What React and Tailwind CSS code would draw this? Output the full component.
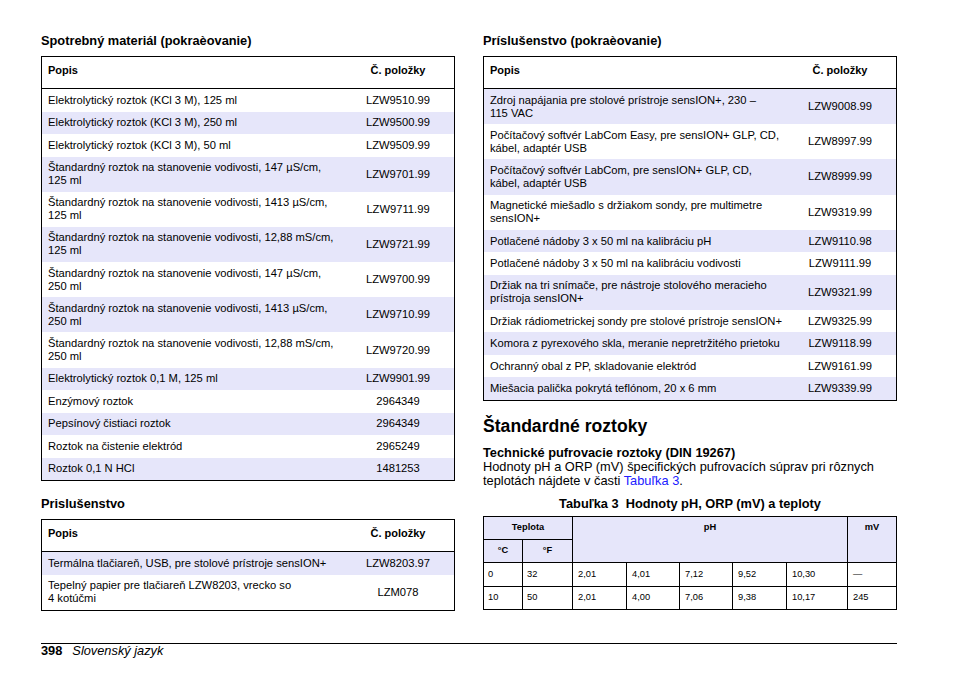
const consumables = [
  { lines: ["Elektrolytický roztok (KCl 3 M), 125 ml"], no: "LZW9510.99" },
  { lines: ["Elektrolytický roztok (KCl 3 M), 250 ml"], no: "LZW9500.99" },
  { lines: ["Elektrolytický roztok (KCl 3 M), 50 ml"], no: "LZW9509.99" },
  { lines: ["Štandardný roztok na stanovenie vodivosti, 147 µS/cm,", "125 ml"], no: "LZW9701.99" },
  { lines: ["Štandardný roztok na stanovenie vodivosti, 1413 µS/cm,", "125 ml"], no: "LZW9711.99" },
  { lines: ["Štandardný roztok na stanovenie vodivosti, 12,88 mS/cm,", "125 ml"], no: "LZW9721.99" },
  { lines: ["Štandardný roztok na stanovenie vodivosti, 147 µS/cm,", "250 ml"], no: "LZW9700.99" },
  { lines: ["Štandardný roztok na stanovenie vodivosti, 1413 µS/cm,", "250 ml"], no: "LZW9710.99" },
  { lines: ["Štandardný roztok na stanovenie vodivosti, 12,88 mS/cm,", "250 ml"], no: "LZW9720.99" },
  { lines: ["Elektrolytický roztok 0,1 M, 125 ml"], no: "LZW9901.99" },
  { lines: ["Enzýmový roztok"], no: "2964349" },
  { lines: ["Pepsínový čistiaci roztok"], no: "2964349" },
  { lines: ["Roztok na čistenie elektród"], no: "2965249" },
  { lines: ["Roztok 0,1 N HCl"], no: "1481253" },
];

const accessories = [
  { lines: ["Termálna tlačiareň, USB, pre stolové prístroje sensION+"], no: "LZW8203.97" },
  { lines: ["Tepelný papier pre tlačiareň LZW8203, vrecko so", "4 kotúčmi"], no: "LZM078" },
];

const accessoriesCont = [
  { lines: ["Zdroj napájania pre stolové prístroje sensION+, 230 –", "115 VAC"], no: "LZW9008.99" },
  { lines: ["Počítačový softvér LabCom Easy, pre sensION+ GLP, CD,", "kábel, adaptér USB"], no: "LZW8997.99" },
  { lines: ["Počítačový softvér LabCom, pre sensION+ GLP, CD,", "kábel, adaptér USB"], no: "LZW8999.99" },
  { lines: ["Magnetické miešadlo s držiakom sondy, pre multimetre", "sensION+"], no: "LZW9319.99" },
  { lines: ["Potlačené nádoby 3 x 50 ml na kalibráciu pH"], no: "LZW9110.98" },
  { lines: ["Potlačené nádoby 3 x 50 ml na kalibráciu vodivosti"], no: "LZW9111.99" },
  { lines: ["Držiak na tri snímače, pre nástroje stolového meracieho", "prístroja sensION+"], no: "LZW9321.99" },
  { lines: ["Držiak rádiometrickej sondy pre stolové prístroje sensION+"], no: "LZW9325.99" },
  { lines: ["Komora z pyrexového skla, meranie nepretržitého prietoku"], no: "LZW9118.99" },
  { lines: ["Ochranný obal z PP, skladovanie elektród"], no: "LZW9161.99" },
  { lines: ["Miešacia palička pokrytá teflónom, 20 x 6 mm"], no: "LZW9339.99" },
];

const bufferRows = [
  ["0", "32", "2,01", "4,01", "7,12", "9,52", "10,30", "—"],
  ["10", "50", "2,01", "4,00", "7,06", "9,38", "10,17", "245"],
];

function SectionTitle({ children, className = "" }) {
  return (
    <h3 className={`text-[12.8px] font-bold leading-[15px] ${className}`}>
      {children}
    </h3>
  );
}

function PartsTable({ rows, startShaded = false }) {
  return (
    <div className="border border-black">
      <div className="flex h-[32px] border-b border-black pt-[7px] text-[11px] font-bold leading-[13px]">
        <div className="w-[300px] pl-[6px]">Popis</div>
        <div className="flex-1 text-center">Č. položky</div>
      </div>

      {rows.map((row, i) => {
        const shaded = startShaded ? i % 2 === 0 : i % 2 === 1;
        return (
          <div
            key={i}
            className={`flex items-center text-[11.2px] leading-[13px] ${
              row.lines.length > 1 ? "h-[35.2px]" : "h-[22.5px]"
            } ${shaded ? "bg-[#e6e6fa]" : "bg-white"}`}
          >
            <div className="w-[300px] whitespace-nowrap pl-[6px]">
              {row.lines.map((line, j) => (
                <div key={j}>{line}</div>
              ))}
            </div>
            <div className="flex-1 text-center">{row.no}</div>
          </div>
        );
      })}
    </div>
  );
}

function BufferTable() {
  const head = "bg-[#e6e6fa] text-center font-bold text-[9.3px] flex items-center justify-center";
  const cell = "bg-white flex items-center text-[9.3px]";

  return (
    <div className="grid grid-cols-[38px_49px_53px_52px_52px_53px_60px_48px] grid-rows-[22px_22px_23px_22px] gap-px border border-black bg-black leading-[11px]">
      <div className={`${head} col-span-2`}>Teplota</div>
      <div className={`${head} col-span-5 row-span-2 !items-start pt-[5px]`}>pH</div>
      <div className={`${head} row-span-2 !items-start pt-[5px]`}>mV</div>
      <div className={head}>°C</div>
      <div className={head}>°F</div>

      {bufferRows.map((row, i) =>
        row.map((v, j) => (
          <div key={`${i}-${j}`} className={`${cell} ${j < 2 ? "pl-[4px]" : "pl-[5px]"}`}>
            {v}
          </div>
        ))
      )}
    </div>
  );
}

export default function App() {
  return (
    <div
      className="min-h-screen w-[954px] bg-white pl-[41px] pt-[33px] text-black"
      style={{ fontFamily: '"Liberation Sans", Arial, sans-serif' }}
    >
      <div className="flex gap-[28px]">
        {/* left column */}
        <div className="w-[414px]">
          <SectionTitle className="mb-[8px]">Spotrebný materiál (pokraèovanie)</SectionTitle>
          <PartsTable rows={consumables} />

          <SectionTitle className="mb-[8px] mt-[15px]">Prislušenstvo</SectionTitle>
          <PartsTable rows={accessories} startShaded />
        </div>

        {/* right column */}
        <div className="w-[414px]">
          <SectionTitle className="mb-[8px]">Príslušenstvo (pokraèovanie)</SectionTitle>
          <PartsTable rows={accessoriesCont} startShaded />

          <h2 className="mt-[15px] text-[17.6px] font-bold leading-[21px]">
            Štandardné roztoky
          </h2>

          <div className="mt-[9px] text-[12.8px] leading-[14px]">
            <p className="font-bold">Technické pufrovacie roztoky (DIN 19267)</p>
            <p>
              Hodnoty pH a ORP (mV) špecifických pufrovacích súprav pri rôznych
              <br />
              teplotách nájdete v časti{" "}
              <span className="text-[#2020ff]">Tabuľka 3</span>.
            </p>
          </div>

          <p className="mt-[8px] mb-[5px] text-center text-[12.8px] font-bold leading-[15px]">
            Tabuľka 3&nbsp;&nbsp;Hodnoty pH, ORP (mV) a teploty
          </p>

          <BufferTable />
        </div>
      </div>

      <div className="mt-[32px] w-[856px] border-t border-black">
        <div className="flex items-center gap-[10px] text-[12.8px] leading-[13px]">
          <span className="font-bold">398</span>
          <span className="italic">Slovenský jazyk</span>
        </div>
      </div>
    </div>
  );
}
